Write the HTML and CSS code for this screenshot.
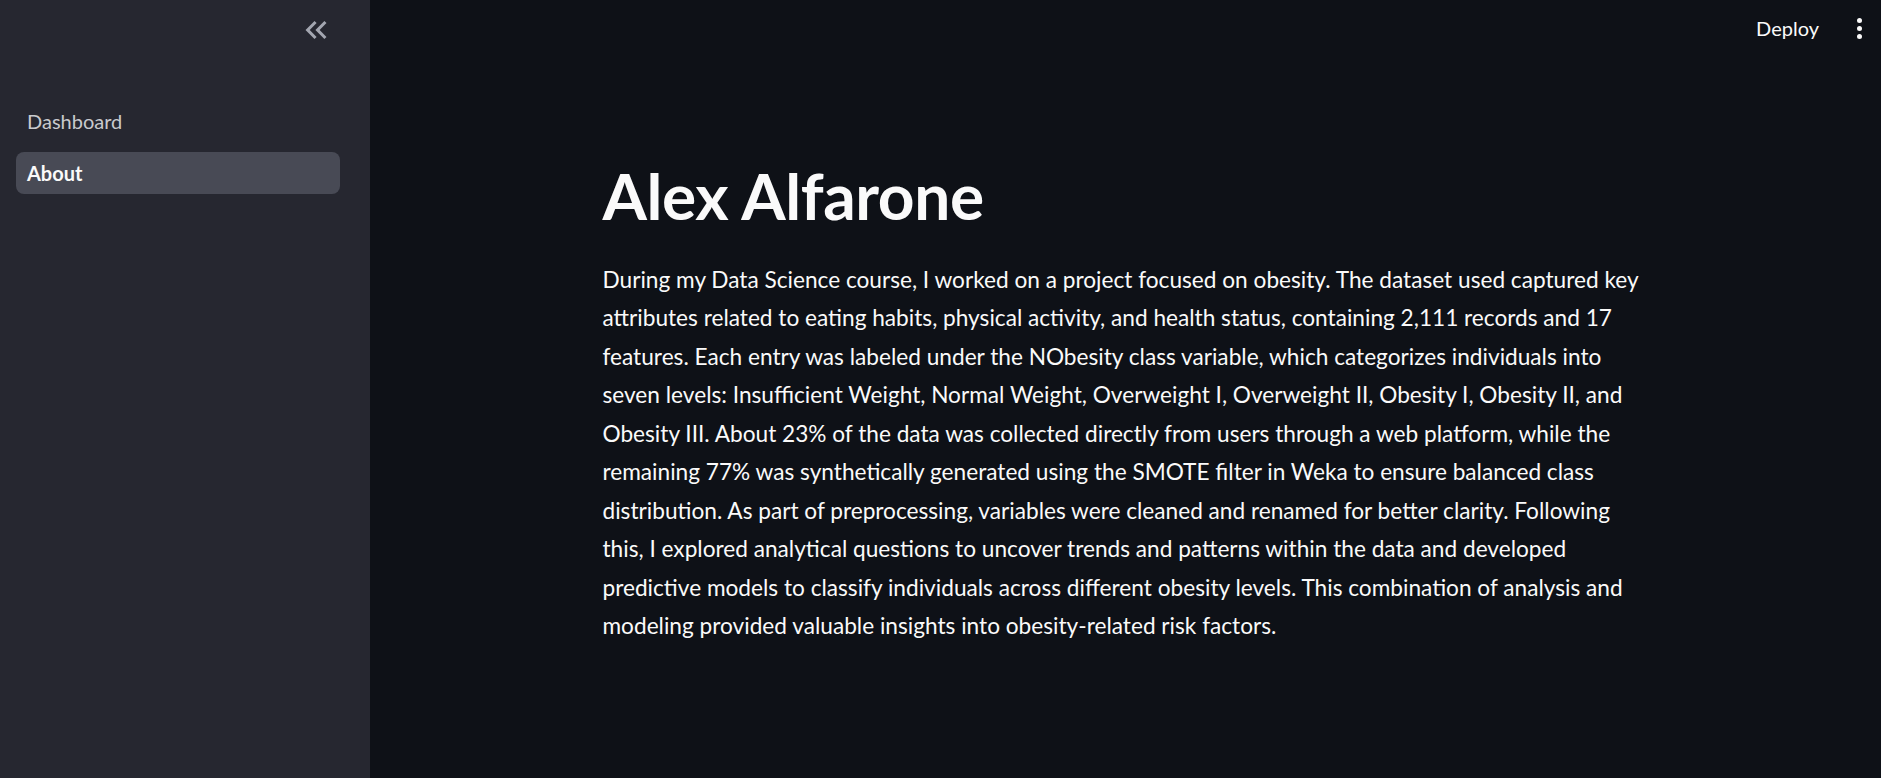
FILE: index.html
```html
<!DOCTYPE html>
<html>
<head>
<meta charset="utf-8">
<link rel="stylesheet" href="styles.css">
</head>
<body>
<aside class="sidebar">
  <div class="sidebar-top">
    <button class="collapse" aria-label="Collapse sidebar">
      <svg viewBox="0 0 24 24" width="36" height="36"><path fill="currentColor" d="M17.59 18L19 16.59 14.42 12 19 7.41 17.59 6l-6 6z M11 18l1.41-1.41L7.83 12l4.58-4.59L11 6l-6 6z"/></svg>
    </button>
  </div>
  <nav class="nav">
    <a class="nav-item">Dashboard</a>
    <a class="nav-item active">About</a>
  </nav>
</aside>
<main class="main">
  <header class="topbar">
    <span class="deploy">Deploy</span>
    <span class="kebab"><i></i><i></i><i></i></span>
  </header>
  <section class="content">
    <h1 class="title">Alex Alfarone</h1>
    <p class="bio">During my Data Science course, I worked on a project focused on obesity. The dataset used captured key<br>attributes related to eating habits, physical activity, and health status, containing 2,111 records and 17<br>features. Each entry was labeled under the NObesity class variable, which categorizes individuals into<br>seven levels: Insufficient Weight, Normal Weight, Overweight I, Overweight II, Obesity I, Obesity II, and<br>Obesity III. About 23% of the data was collected directly from users through a web platform, while the<br>remaining 77% was synthetically generated using the SMOTE filter in Weka to ensure balanced class<br>distribution. As part of preprocessing, variables were cleaned and renamed for better clarity. Following<br>this, I explored analytical questions to uncover trends and patterns within the data and developed<br>predictive models to classify individuals across different obesity levels. This combination of analysis and<br>modeling provided valuable insights into obesity-related risk factors.</p>
  </section>
</main>
</body>
</html>
```
FILE: styles.css
```css
* { box-sizing: border-box; }
html, body { margin: 0; height: 100%; }
body {
  display: flex;
  font-family: Lato, "Noto Sans", sans-serif;
  color: #fafafa;
  background: #0e1117;
  overflow: hidden;
}
.sidebar {
  width: 370px;
  flex: none;
  background: #262730;
  display: flex;
  flex-direction: column;
  padding: 0 30px 0 16px;
}
.sidebar-top {
  height: 100px;
  display: flex;
  justify-content: flex-end;
  align-items: flex-start;
  padding-top: 12px;
}
.collapse {
  background: none;
  border: 0;
  padding: 0;
  margin-right: 6px;
  color: #a3a6b0;
  width: 36px;
  height: 36px;
  display: flex;
}
.nav { display: flex; flex-direction: column; gap: 10px; }
.nav-item {
  height: 42px;
  display: flex;
  align-items: center;
  padding: 0 11px;
  border-radius: 8px;
  font-size: 20px;
  color: #c9cacd;
}
.nav-item.active {
  background: #484a55;
  color: #fafafa;
  font-weight: 700;
}
.main {
  flex: 1;
  display: flex;
  flex-direction: column;
}
.topbar {
  height: 56px;
  display: flex;
  justify-content: flex-end;
  align-items: center;
  padding-right: 19px;
  gap: 38px;
}
.deploy { font-size: 20px; color: #fafafa; }
.kebab { display: flex; flex-direction: column; gap: 3px; }
.kebab i { width: 5px; height: 5px; border-radius: 50%; background: #fafafa; display: block; }
.content {
  width: 1046px;
  margin: 0 auto;
  padding-top: 102px;
}
.title {
  margin: 0 0 26px;
  font-size: 64px;
  font-weight: 700;
  line-height: 1.2;
  letter-spacing: -0.4px;
}
.bio {
  margin: 0;
  font-size: 22.65px;
  line-height: 38.5px;
  white-space: nowrap;
}
```
